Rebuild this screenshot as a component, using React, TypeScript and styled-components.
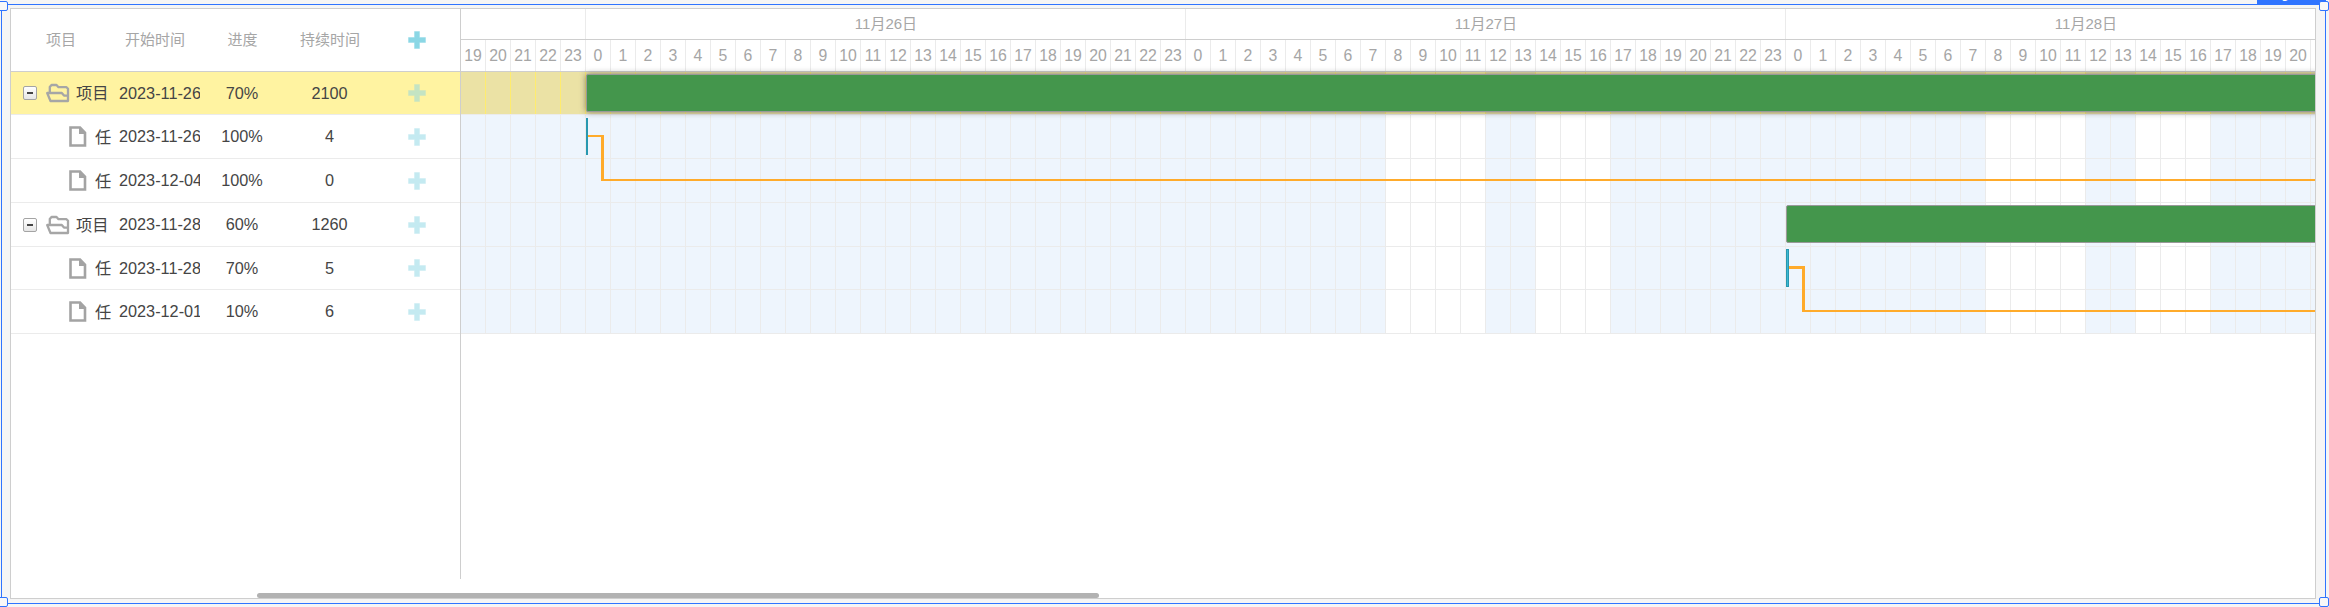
import React from "react";
import styled, { createGlobalStyle } from "styled-components";

const Global = createGlobalStyle`
  * { box-sizing: border-box; }
  body { margin: 0; background: #f5f5f5; overflow: hidden; }
`;

const BLUE = "#2f74ff";
const ROW_HEIGHTS = [43, 44, 44, 44, 43, 44];

const Page = styled.div`
  position: relative;
  width: 2329px;
  height: 607px;
  overflow: hidden;
  padding: 8px 13px 8px 10px;
  background: #f5f5f5;
  font-family: "Liberation Sans", "Noto Sans CJK SC", sans-serif;
`;

const Selection = styled.div`
  position: absolute;
  left: 1px;
  top: 4px;
  width: 2325px;
  height: 600px;
  border: 1px solid ${BLUE};
`;

const Handle = styled.i<{ $x: number; $y: number }>`
  position: absolute;
  left: ${(p) => p.$x}px;
  top: ${(p) => p.$y}px;
  width: 10px;
  height: 10px;
  border: 1px solid ${BLUE};
  border-radius: 2px;
  background: #f8f8f8;
`;

const Tag = styled.div`
  position: absolute;
  left: 2257px;
  top: -14px;
  width: 69px;
  height: 18px;
  padding-left: 6px;
  background: ${BLUE};
  color: #fff;
  font-size: 14px;
  line-height: 15px;
  white-space: nowrap;
`;

const Chart = styled.div`
  position: relative;
  display: flex;
  width: 2306px;
  height: 591px;
  border: 1px solid #cecece;
  background: #fff;
  overflow: hidden;
`;

const Grid = styled.div`
  width: 450px;
  height: 570px;
  flex: none;
  border-right: 1px solid #cecece;
`;

const GridHead = styled.div`
  display: flex;
  align-items: center;
  height: 63px;
  border-bottom: 1px solid #cecece;
  color: #a6a6a6;
  font-size: 15px;
`;

const HeadLabel = styled.span`
  padding-bottom: 3px;
`;

const GridRow = styled.div<{ $h: number; $selected?: boolean }>`
  display: flex;
  align-items: center;
  height: ${(p) => p.$h}px;
  border-bottom: 1px solid #ebebeb;
  background: ${(p) => (p.$selected ? "#fff3a1" : "#fff")};
  color: #454545;
  font-size: 16.25px;
`;

const Cell = styled.div<{ $w: number }>`
  width: ${(p) => p.$w}px;
  flex: none;
  display: flex;
  align-items: center;
  justify-content: center;
  white-space: nowrap;
`;

const NameCell = styled.div`
  width: 101px;
  height: 100%;
  flex: none;
  display: flex;
  align-items: center;
  white-space: nowrap;
`;

const Toggle = styled.span`
  display: flex;
  flex: none;
  align-items: center;
  justify-content: center;
  width: 14px;
  height: 14px;
  margin: 0 9px 0 12px;
  border: 1px solid #a4a4a4;
  border-radius: 2px;
  background: linear-gradient(#fff, #e6e6e6);
  &::after { content: ""; width: 6px; height: 2px; background: #444; }
`;

const TaskName = styled.span<{ $gap: number }>`
  margin-left: ${(p) => p.$gap}px;
  padding-bottom: 2px;
`;

const DateCell = styled.div`
  width: 81px;
  margin: 0 13px 0 7px;
  overflow: hidden;
  flex: none;
  white-space: nowrap;
`;

const FileIcon = styled.svg`
  flex: none;
  margin-left: 58px;
`;

const Timeline = styled.div`
  position: relative;
  width: 1854px;
  flex: none;
  overflow: hidden;
`;

const Days = styled.div`
  display: flex;
  height: 31px;
  border-bottom: 1px solid #cecece;
`;

const Day = styled.div<{ $w: number }>`
  width: ${(p) => p.$w}px;
  flex: none;
  border-right: 1px solid #ebebeb;
  padding-left: 1px;
  text-align: center;
  color: #a6a6a6;
  font-size: 15px;
  line-height: 29px;
`;

const Hours = styled.div`
  display: flex;
  height: 32px;
  border-bottom: 1px solid #cecece;
`;

const Hour = styled.div`
  width: 25px;
  flex: none;
  border-right: 1px solid #ebebeb;
  color: #a6a6a6;
  font-size: 15.8px;
  line-height: 32px;
  text-align: center;
`;

const TimeRow = styled.div<{ $h: number }>`
  display: flex;
  height: ${(p) => p.$h}px;
  border-bottom: 1px solid #ebebeb;
`;

const Slot = styled.div<{ $off: boolean; $selected?: boolean }>`
  width: 25px;
  flex: none;
  border-right: 1px solid ${(p) => (p.$selected ? "#ffec6e" : "#ebebeb")};
  background: ${(p) => (p.$selected ? (p.$off ? "#ebe2a5" : "#fff3a1") : p.$off ? "#eef5fd" : "#fff")};
`;

const Bar = styled.div<{ $x: number; $y: number; $selected?: boolean }>`
  position: absolute;
  left: ${(p) => p.$x}px;
  top: ${(p) => p.$y}px;
  width: 2600px;
  height: 38px;
  border: 1px solid #999;
  border-radius: 2px;
  background: #44964c;
  box-shadow: ${(p) => (p.$selected ? "0 0 6px rgba(90, 90, 90, .75)" : "none")};
`;

const Task = styled.div<{ $x: number; $y: number; $w: number; $h: number }>`
  position: absolute;
  left: ${(p) => p.$x}px;
  top: ${(p) => p.$y}px;
  width: ${(p) => p.$w}px;
  height: ${(p) => p.$h}px;
  border: 1px solid #2898b0;
  background: #3db9d3;
`;

const Link = styled.svg`
  position: absolute;
  left: 0;
  top: 0;
`;

const Scroll = styled.div`
  position: absolute;
  left: 246px;
  top: 584px;
  width: 842px;
  height: 5px;
  border-radius: 3px;
  background: #b2b2b2;
`;

const Plus = ({ faded }: { faded?: boolean }) => (
  <svg width="18" height="18" viewBox="0 0 18 18" opacity={faded ? 0.5 : 1}>
    <path d="M6.5 0.5h5v6h6v5h-6v6h-5v-6h-6v-5h6z" fill="#8bd7e5" stroke="#8bd7e5" strokeLinejoin="round" strokeWidth=".4" />
  </svg>
);

const Folder = () => (
  <svg width="24" height="20" viewBox="0 0 24 20" fill="none" stroke="#a6a6a6" strokeWidth="2.3" strokeLinejoin="round">
    <path d="M3.8 9.5V4L5.5 2H10.5L12.5 4.2H20.5L22 5.7V18H4.5L1.2 10H15.8L18 12.6H22" />
  </svg>
);

const File = () => (
  <FileIcon width="18" height="21" viewBox="0 0 18 21">
    <path d="M1.5 1.5H11L16 6.8V19.5H1.5Z" fill="#fff" stroke="#a3a3a3" strokeWidth="2.6" />
    <path d="M10 1v7h7z" fill="#a3a3a3" />
  </FileIcon>
);

const tasks = [
  { project: true, date: "2023-11-26", progress: "70%", duration: "2100" },
  { project: false, date: "2023-11-26", progress: "100%", duration: "4" },
  { project: false, date: "2023-12-04", progress: "100%", duration: "0" },
  { project: true, date: "2023-11-28", progress: "60%", duration: "1260" },
  { project: false, date: "2023-11-28", progress: "70%", duration: "5" },
  { project: false, date: "2023-12-01", progress: "10%", duration: "6" },
];

const SLOTS = 74;
const hours = Array.from({ length: SLOTS + 1 }, (_, i) => (i + 19) % 24);
const isOff = (i: number) => {
  const h = hours[i];
  return i < 29 || h < 8 || h === 12 || h === 13 || h > 16;
};

export default function App() {
  return (
    <Page>
      <Global />
      <Chart>
        <Grid>
          <GridHead>
            <Cell $w={100}><HeadLabel>项目</HeadLabel></Cell>
            <Cell $w={88}><HeadLabel>开始时间</HeadLabel></Cell>
            <Cell $w={87}><HeadLabel>进度</HeadLabel></Cell>
            <Cell $w={88}><HeadLabel>持续时间</HeadLabel></Cell>
            <Cell $w={86}><Plus /></Cell>
          </GridHead>
          {tasks.map((t, i) => (
            <GridRow key={i} $h={ROW_HEIGHTS[i]} $selected={i === 0}>
              <NameCell>
                {t.project ? <><Toggle /><Folder /></> : <File />}
                <TaskName $gap={t.project ? 6 : 8}>{t.project ? "项目" : "任"}</TaskName>
              </NameCell>
              <DateCell>{t.date}</DateCell>
              <Cell $w={58}>{t.progress}</Cell>
              <Cell $w={117}>{t.duration}</Cell>
              <Cell $w={58}><Plus faded /></Cell>
            </GridRow>
          ))}
        </Grid>
        <Timeline>
          <Days>
            <Day $w={125} />
            <Day $w={600}>11月26日</Day>
            <Day $w={600}>11月27日</Day>
            <Day $w={600}>11月28日</Day>
          </Days>
          <Hours>{hours.slice(0, SLOTS).map((h, i) => <Hour key={i}>{h}</Hour>)}</Hours>
          {ROW_HEIGHTS.map((h, r) => (
            <TimeRow key={r} $h={h}>
              {hours.map((_, i) => <Slot key={i} $off={isOff(i)} $selected={r === 0} />)}
            </TimeRow>
          ))}
          <Link width="1854" height="330" fill="#ffab2b" shapeRendering="crispEdges">
            <path d="M127 126h16v44h1711v2h-1714v-44h-13z" />
            <path d="M1328 257h16v44h510v2h-513v-43h-13z" />
          </Link>
          <Bar $x={125} $y={65} $selected />
          <Bar $x={1325} $y={196} />
          <Task $x={125} $y={109} $w={2} $h={37} />
          <Task $x={1325} $y={240} $w={3} $h={38} />
        </Timeline>
        <Scroll />
      </Chart>
      <Selection />
      <Tag>日 gantt</Tag>
      <Handle $x={-2} $y={1} />
      <Handle $x={2319} $y={1} />
      <Handle $x={-2} $y={597} />
      <Handle $x={2319} $y={597} />
    </Page>
  );
}
